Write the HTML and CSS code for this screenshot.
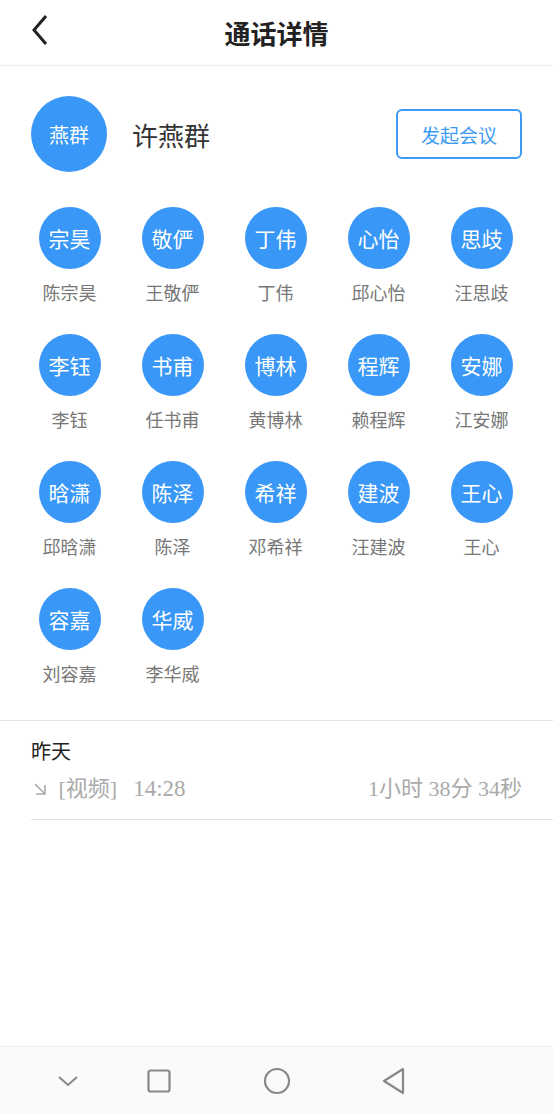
FILE: index.html
```html
<!DOCTYPE html>
<html lang="zh">
<head>
  <meta charset="UTF-8">
  <title>通话详情</title>
  <link rel="stylesheet" href="styles.css">
</head>
<body>
  <header class="topbar">
    <a class="back" href="#">
      <svg width="20" height="32" viewBox="0 0 20 32"><path d="M16 2 L4 16 L16 30" fill="none" stroke="#222" stroke-width="3"/></svg>
    </a>
    <h1>通话详情</h1>
  </header>

  <section class="profile">
    <div class="avatar big">燕群</div>
    <div class="name">许燕群</div>
    <button class="btn-meeting">发起会议</button>
  </section>

  <section class="members">
    <div class="member"><div class="avatar">宗昊</div><span>陈宗昊</span></div>
    <div class="member"><div class="avatar">敬俨</div><span>王敬俨</span></div>
    <div class="member"><div class="avatar">丁伟</div><span>丁伟</span></div>
    <div class="member"><div class="avatar">心怡</div><span>邱心怡</span></div>
    <div class="member"><div class="avatar">思歧</div><span>汪思歧</span></div>
    <div class="member"><div class="avatar">李钰</div><span>李钰</span></div>
    <div class="member"><div class="avatar">书甫</div><span>任书甫</span></div>
    <div class="member"><div class="avatar">博林</div><span>黄博林</span></div>
    <div class="member"><div class="avatar">程辉</div><span>赖程辉</span></div>
    <div class="member"><div class="avatar">安娜</div><span>江安娜</span></div>
    <div class="member"><div class="avatar">晗潇</div><span>邱晗潇</span></div>
    <div class="member"><div class="avatar">陈泽</div><span>陈泽</span></div>
    <div class="member"><div class="avatar">希祥</div><span>邓希祥</span></div>
    <div class="member"><div class="avatar">建波</div><span>汪建波</span></div>
    <div class="member"><div class="avatar">王心</div><span>王心</span></div>
    <div class="member"><div class="avatar">容嘉</div><span>刘容嘉</span></div>
    <div class="member"><div class="avatar">华威</div><span>李华威</span></div>
  </section>

  <section class="history">
    <div class="day">昨天</div>
    <div class="call">
      <span class="call-info">
        <svg class="arrow" width="14" height="14" viewBox="0 0 14 14"><path d="M2 2 L12 12 M3 12 H12 V3" fill="none" stroke="#aaa" stroke-width="1.6"/></svg>
        [视频]<span class="time">14:28</span>
      </span>
      <span class="duration">1小时 38分 34秒</span>
    </div>
  </section>

  <nav class="navbar">
    <svg class="nav-down" width="22" height="12" viewBox="0 0 22 12"><path d="M2 2 L11 10 L20 2" fill="none" stroke="#888" stroke-width="2"/></svg>
    <svg class="nav-square" width="24" height="24" viewBox="0 0 24 24"><rect x="1.5" y="1.5" width="21" height="21" rx="2" fill="none" stroke="#888" stroke-width="2.2"/></svg>
    <svg class="nav-circle" width="28" height="28" viewBox="0 0 28 28"><circle cx="14" cy="14" r="12" fill="none" stroke="#888" stroke-width="2.2"/></svg>
    <svg class="nav-back" width="26" height="28" viewBox="0 0 26 28"><path d="M22 2 L3 14 L22 26 Z" fill="none" stroke="#888" stroke-width="2.2" stroke-linejoin="round"/></svg>
  </nav>
</body>
</html>
```

FILE: styles.css
```css
* {
  box-sizing: border-box;
}

body {
  margin: 0;
  min-height: 100vh;
  display: flex;
  flex-direction: column;
  background: #fff;
  font-family: "Liberation Serif", "Noto Sans CJK SC", serif;
  color: #333;
}

.topbar {
  height: 66px;
  border-bottom: 1px solid #ededed;
  display: flex;
  align-items: center;
  justify-content: center;
  position: relative;
}

.topbar h1 {
  margin: 0;
  font-family: "Noto Sans CJK SC", sans-serif;
  font-size: 26px;
  font-weight: 700;
  color: #222;
}

.back {
  position: absolute;
  left: 30px;
  top: 14px;
}

.profile {
  display: flex;
  align-items: center;
  padding: 30px 31px 0 31px;
}

.avatar {
  width: 62px;
  height: 62px;
  border-radius: 50%;
  background: #3897f7;
  color: #fff;
  display: flex;
  align-items: center;
  justify-content: center;
  font-size: 21px;
}

.avatar.big {
  width: 76px;
  height: 76px;
  font-size: 20px;
}

.name {
  margin-left: 25px;
  font-size: 26px;
  color: #333;
  flex: 1;
}

.btn-meeting {
  width: 126px;
  height: 50px;
  border: 2px solid #3d9af5;
  border-radius: 6px;
  background: #fff;
  color: #3d9af5;
  font-family: "Noto Sans CJK SC", sans-serif;
  font-size: 19px;
  cursor: pointer;
}

.members {
  display: grid;
  grid-template-columns: repeat(5, 103px);
  row-gap: 27px;
  padding: 35px 0 32px 18px;
  border-bottom: 1px solid #e2e2e2;
}

.member {
  display: flex;
  flex-direction: column;
  align-items: center;
}

.member span {
  margin-top: 12px;
  line-height: 26px;
  font-size: 18px;
  color: #777;
}

.history {
  margin-left: 31px;
  padding: 18px 31px 16px 0;
  border-bottom: 1px solid #e2e2e2;
}

.day {
  font-size: 20px;
  line-height: 26px;
  color: #222;
}

.call {
  margin-top: 10px;
  display: flex;
  justify-content: space-between;
  align-items: center;
  font-size: 22px;
  line-height: 28px;
  color: #aaa;
}

.arrow {
  margin: 0 6px 0 2px;
}

.time {
  margin-left: 16px;
  font-size: 23px;
}

.navbar {
  margin-top: auto;
  height: 68px;
  border-top: 1px solid #ececec;
  background: #fafafa;
  display: flex;
  align-items: center;
}

.nav-down {
  margin-left: 57px;
}

.nav-square {
  margin-left: 68px;
}

.nav-circle {
  margin-left: 92px;
}

.nav-back {
  margin-left: 90px;
}
```
